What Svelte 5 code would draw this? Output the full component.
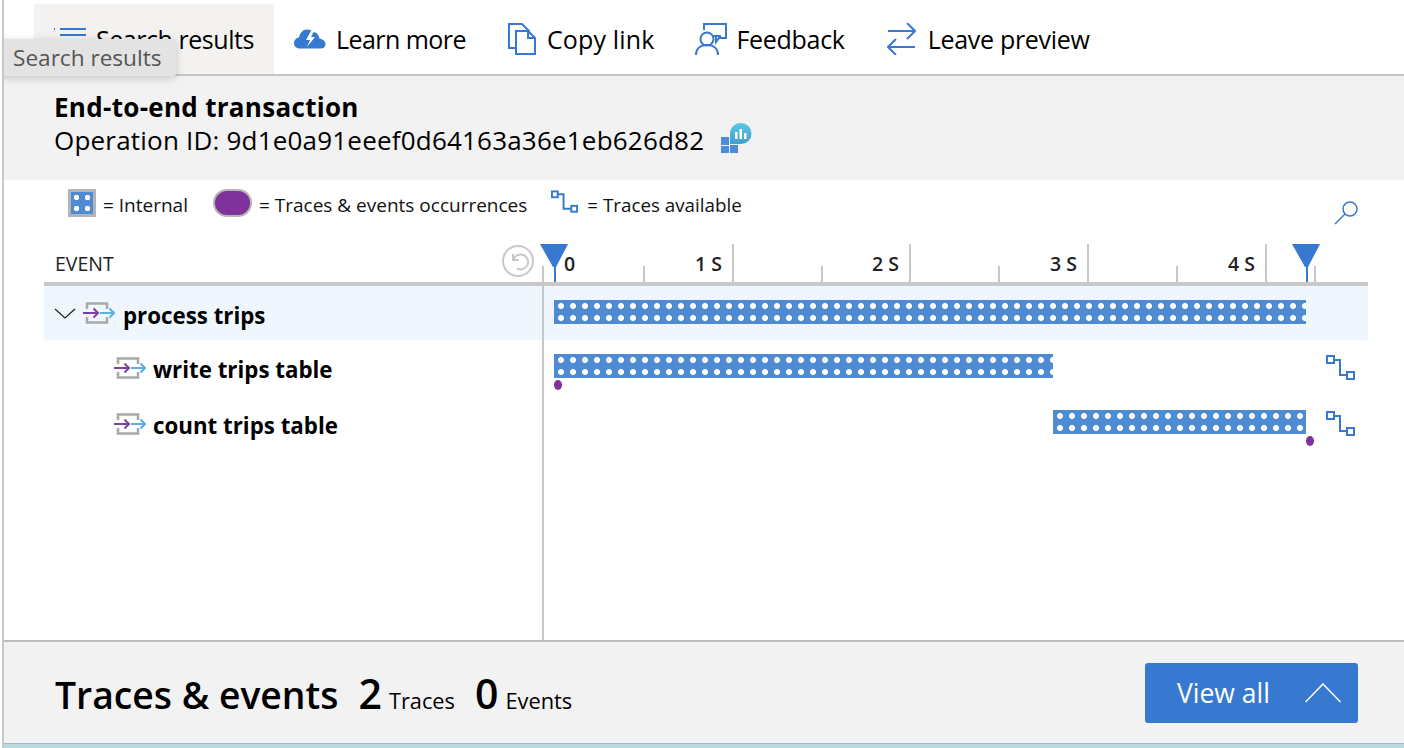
<script>
  const ticks = [
    { x: 99, major: false },
    { x: 188, major: true, label: '1 S' },
    { x: 277, major: false },
    { x: 365, major: true, label: '2 S' },
    { x: 454, major: false },
    { x: 543, major: true, label: '3 S' },
    { x: 632, major: false },
    { x: 721, major: true, label: '4 S' },
    { x: 770, major: false }
  ];

  const rows = [
    { name: 'process trips', root: true, left: 10, width: 752 },
    { name: 'write trips table', left: 10, width: 499, dot: 10, traces: true },
    { name: 'count trips table', left: 509, width: 253, dot: 762, traces: true }
  ];
</script>

{#snippet traceIcon()}
  <svg class="trace" width="29" height="26" viewBox="0 0 29 26" fill="none" stroke="#3778d0" stroke-width="2">
    <rect x="1" y="1" width="7" height="7" />
    <path d="M8 5h6v15h7" />
    <rect x="21" y="17" width="7" height="7" />
  </svg>
{/snippet}

{#snippet spanIcon()}
  <svg class="span" width="32" height="22" viewBox="0 0 32 22" fill="none" stroke-width="2">
    <path d="M4 7V1.500h20V7M4 15v5.500h20V15" stroke="#a9a9a9" stroke-width="2.500" />
    <path d="M0 11h15M10.500 6.500 15 11l-4.500 4.500" stroke="#7f3f9f" />
    <path d="M17 11h14M26.500 6.500 31 11l-4.500 4.500" stroke="#5fb0dc" />
  </svg>
{/snippet}

{#snippet marker(x)}
  <svg class="marker" style="left:{x}px" width="28" height="38" viewBox="0 0 28 38">
    <path d="M0 0h28L16 23v15h-2V23h-1z" fill="#3778d0" />
  </svg>
{/snippet}

<div class="page">
  <nav class="toolbar">
    <div class="tool active">
      <svg width="34" height="30" viewBox="0 0 34 30" fill="none" stroke="#3778d0" stroke-width="2">
        <path d="M8 5h26M8 11h26M8 17h26M2 5h1" />
      </svg>
      <span>Search results</span>
    </div>
    <div class="tool learn">
      <svg width="32" height="22" viewBox="0 0 32 22">
        <path d="M6 20.500C2 20.500 0 18 0 15s2.500-5.500 5-5.500C6 5 9 1.500 13 1.500c3 0 5 1 7 3 1-.5 3 .5 4 2.500 1.500 2 1 3 1.500 3.500 3 .5 6 2.500 6 5.500s-2 4.500-5 4.500z" fill="#3778d0" />
        <path d="M17 3l-5 9h4l-3 7 8-10h-4l3-6z" fill="#fff" />
      </svg>
      <span>Learn more</span>
    </div>
    <div class="tool copy">
      <svg width="29" height="32" viewBox="0 0 29 32" fill="none" stroke="#3778d0" stroke-width="2">
        <path d="M8 25H1V1h13l7 7v3" />
        <path d="M8 8h12l7 7v16H8zM20 8v7h7" />
      </svg>
      <span>Copy link</span>
    </div>
    <div class="tool">
      <svg width="32" height="33" viewBox="0 0 32 33" fill="none" stroke="#3778d0" stroke-width="2">
        <path d="M9 7V1h22v14h-7l-3 4v-6M26 13h-8" />
        <circle cx="12" cy="16" r="6.500" />
        <path d="M1 32c0-6 4-10 11-10s11 4 11 10" />
      </svg>
      <span>Feedback</span>
    </div>
    <div class="tool leave">
      <svg width="29" height="32" viewBox="0 0 29 32" fill="none" stroke="#3778d0" stroke-width="2">
        <path d="M1 8h27M20 0l8 8-8 8M28 24H2M9 16l-8 8 8 8" />
      </svg>
      <span>Leave preview</span>
    </div>
    <div class="tooltip">Search results</div>
  </nav>

  <header class="heading">
    <h1>End-to-end transaction</h1>
    <div class="op">
      <span>Operation ID: 9d1e0a91eeef0d64163a36e1eb626d82</span>
      <svg width="32" height="31" viewBox="0 0 32 31">
        <defs>
          <linearGradient id="ai" x1="0" y1="0" x2="0" y2="1">
            <stop offset="0" stop-color="#5cc8e6" />
            <stop offset="1" stop-color="#3f9fd0" />
          </linearGradient>
        </defs>
        <path d="M1 22h8v-8H1zM10 30h8v-8h-8zM1 30h8v-7H1z" fill="#4a8bdc" />
        <path d="M21 0a10.500 10.500 0 0 1 0 21H10V10.500A10.500 10.500 0 0 1 21 0z" fill="url(#ai)" />
        <path d="M15 9h2.500v7H15zM19.500 6H22v10h-2.500zM24 10h2.500v6H24z" fill="#fff" />
      </svg>
    </div>
  </header>

  <main class="chart">
    <div class="legend">
      <div class="legend-item">
        <span class="swatch"></span>
        <span class="legend-text">= Internal</span>
      </div>
      <div class="legend-item">
        <span class="pill"></span>
        <span class="legend-text">= Traces &amp; events occurrences</span>
      </div>
      <div class="legend-item tight">
        <svg width="28" height="26" viewBox="0 0 29 26" fill="none" stroke="#3778d0" stroke-width="2">
          <rect x="1" y="1" width="6" height="6" />
          <path d="M7 4h6v15h8" />
          <rect x="21" y="16" width="6" height="6" />
        </svg>
        <span class="legend-text">= Traces available</span>
      </div>
      <svg class="zoom" width="24" height="24" viewBox="0 0 24 24" fill="none" stroke="#3778d0" stroke-width="1.500">
        <circle cx="16" cy="8" r="7" />
        <path d="M11 13 1 23" />
      </svg>
    </div>

    <div class="gantt">
      <div class="axis-head">
        <div class="event-label">EVENT</div>
        <svg class="undo" width="32" height="32" viewBox="0 0 32 32" fill="none" stroke="#c8c8c8" stroke-width="2">
          <circle cx="16" cy="16" r="15" />
          <path d="M11 9v6h6M11.500 14.500A7.500 7.500 0 1 1 15 23.500" />
        </svg>
      </div>
      <div class="axis">
        {@render marker(-4)}
        {@render marker(748)}
        <span class="zero">0</span>
        {#each ticks as t}
          <div class="tick" class:major={t.major} style="left:{t.x}px">
            {#if t.label}<span>{t.label}</span>{/if}
          </div>
        {/each}
      </div>

      {#each rows as r}
        <div class="name" class:root={r.root}>
          {#if r.root}
            <svg class="chev" width="22" height="11" viewBox="0 0 22 11" fill="none" stroke="#222" stroke-width="1.300">
              <path d="M1 1l10 9 10-9" />
            </svg>
          {/if}
          {@render spanIcon()}
          <strong>{r.name}</strong>
        </div>
        <div class="lane" class:root={r.root}>
          <div class="bar" style="left:{r.left}px;width:{r.width}px"></div>
          {#if r.dot}<span class="dot" style="left:{r.dot}px"></span>{/if}
          {#if r.traces}{@render traceIcon()}{/if}
        </div>
      {/each}

      <div class="rest"></div>
      <div></div>
    </div>
  </main>

  <footer class="footer">
    <div class="counts">
      <span class="title">Traces &amp; events</span>
      <span class="num">2</span><span class="unit">Traces</span>
      <span class="num">0</span><span class="unit">Events</span>
    </div>
    <button class="view">
      <span>View all</span>
      <svg width="36" height="20" viewBox="0 0 36 20" fill="none" stroke="#fff" stroke-width="1.500">
        <path d="M0.500 19 18 1l17.500 18" />
      </svg>
    </button>
  </footer>
</div>

<style>
  :global(body) {
    margin: 0;
    background: #fff;
  }
  .page {
    height: 748px;
    margin-left: 2px;
    border-left: 2px solid #c8c8c8;
    display: flex;
    flex-direction: column;
    font-family: "Open Sans", "Noto Sans", sans-serif;
    color: #000;
    overflow: hidden;
    box-sizing: border-box;
  }
  .toolbar {
    position: relative;
    height: 76px;
    flex: none;
    box-sizing: border-box;
    padding: 4px 0 0 30px;
    border-bottom: 2px solid #c4c4c4;
    display: flex;
  }
  .tool {
    display: flex;
    align-items: center;
    gap: 10px;
    padding: 0 20px 0 18px;
    font-size: 25px;
    letter-spacing: -0.3px;
    white-space: nowrap;
  }
  .tool + .tool {
    padding-left: 20px;
  }
  .tool svg {
    flex: none;
  }
  .active {
    background: #f3f2f1;
    letter-spacing: -0.45px;
  }
  .learn {
    letter-spacing: -0.55px;
  }
  .tool.copy {
    letter-spacing: 0.15px;
    padding-left: 22px;
  }
  .tool.leave {
    padding-left: 22px;
    gap: 12px;
  }
  .tooltip {
    position: absolute;
    left: -4px;
    top: 39px;
    height: 37px;
    width: 176px;
    box-sizing: border-box;
    padding-left: 13px;
    line-height: 37px;
    font-size: 22.600px;
    letter-spacing: 0;
    color: #555;
    background: #e3e3e3;
    border-radius: 0 2px 2px 0;
    box-shadow: 0 2px 8px rgba(0, 0, 0, 0.18);
  }
  .heading {
    height: 104px;
    flex: none;
    box-sizing: border-box;
    padding: 14px 0 0 50px;
    background: #f2f2f2;
  }
  h1 {
    margin: 0 0 -1px;
    font-size: 26px;
    letter-spacing: 0.3px;
    font-weight: 700;
    line-height: 34px;
  }
  .op {
    display: flex;
    align-items: center;
    gap: 16px;
    font-size: 26px;
    letter-spacing: 0.2px;
    line-height: 34px;
  }
  .op svg {
    margin-top: -3px;
  }
  .chart {
    flex: 1;
    display: flex;
    flex-direction: column;
    min-height: 0;
  }
  .legend {
    height: 64px;
    flex: none;
    box-sizing: border-box;
    padding: 9px 46px 0 64px;
    display: flex;
    align-items: flex-start;
    gap: 25px;
    font-size: 19px;
    color: #111;
  }
  .legend-item {
    display: flex;
    align-items: center;
    gap: 7px;
    height: 28px;
  }
  .legend-item.tight {
    gap: 8px;
    margin-left: -1px;
    font-size: 18.800px;
  }
  .legend-text {
    padding-top: 3px;
  }
  .swatch {
    width: 28px;
    height: 28px;
    box-sizing: border-box;
    border: 3px solid #b4b4b4;
    background-color: #4f8bd2;
    background-image: radial-gradient(circle at 5.500px 5.500px, #fff 2.500px, transparent 3px);
    background-size: 11px 11px;
  }
  .pill {
    width: 39px;
    height: 28px;
    box-sizing: border-box;
    border-radius: 14px;
    border: 2px solid #b4b4b4;
    background: #7f319c;
  }
  .zoom {
    margin-left: auto;
    margin-top: 12px;
  }
  .gantt {
    flex: 1;
    margin: 0 36px 0 40px;
    display: grid;
    grid-template-columns: 500px 1fr;
    grid-template-rows: 42px 54px 56px 56px 1fr;
  }
  .axis-head {
    border-bottom: 4px solid #c8c8c8;
    display: flex;
    justify-content: space-between;
    position: relative;
  }
  .event-label {
    padding: 7px 0 0 11px;
    font-size: 19.500px;
    font-weight: 500;
    line-height: 26px;
    color: #222;
  }
  .undo {
    margin: 1px 10px 0 0;
  }
  .axis {
    position: relative;
    border-bottom: 4px solid #c8c8c8;
  }
  .axis::before {
    content: "";
    position: absolute;
    left: -2px;
    top: 22px;
    bottom: 0;
    width: 2px;
    background: #c8c8c8;
  }
  .marker {
    position: absolute;
    top: 0;
  }
  .zero {
    position: absolute;
    left: 20px;
    top: 7px;
    font-size: 19.500px;
    font-weight: 600;
    line-height: 26px;
    color: #222;
  }
  .tick {
    position: absolute;
    bottom: 0;
    width: 2px;
    height: 16px;
    background: #c8c8c8;
  }
  .tick.major {
    height: 38px;
  }
  .tick span {
    position: absolute;
    right: 12px;
    top: 7px;
    font-size: 19.500px;
    font-weight: 600;
    line-height: 26px;
    color: #222;
    white-space: nowrap;
  }
  .name {
    display: flex;
    align-items: center;
    gap: 7px;
    padding-left: 70px;
    border-right: 2px solid #c8c8c8;
    font-size: 22.300px;
  }
  .name strong {
    padding-top: 2px;
  }
  .name.root {
    padding-left: 10px;
    background: #eff6fd;
  }
  .name.root strong {
    padding-top: 5px;
    margin-left: 1px;
  }
  .lane {
    position: relative;
  }
  .lane.root {
    background: #eff6fd;
  }
  .bar {
    position: absolute;
    top: 14px;
    height: 24px;
    background-color: #4f8bd2;
    background-image: radial-gradient(circle at 7px 6px, #fff 2.700px, transparent 3.200px);
    background-size: 12px 12px;
  }
  .dot {
    position: absolute;
    top: 40px;
    width: 8px;
    height: 10px;
    border-radius: 50%;
    background: #7f319c;
  }
  .trace {
    position: absolute;
    right: 13px;
    top: 15px;
  }
  .rest {
    border-right: 2px solid #c8c8c8;
  }
  .footer {
    height: 108px;
    flex: none;
    box-sizing: border-box;
    border-top: 2px solid #bdbdbd;
    border-bottom: 4px solid #b9d9dc;
    box-shadow: inset 0 -1px 0 #9dbfc4;
    background: #f2f2f2;
    padding: 21px 46px 0 51px;
    display: flex;
    justify-content: space-between;
    align-items: flex-start;
  }
  .counts {
    display: flex;
    align-items: baseline;
    height: 60px;
    line-height: 60px;
  }
  .title {
    font-size: 37.300px;
    font-weight: 600;
  }
  .num {
    font-size: 41px;
    font-weight: 600;
    margin-left: 20px;
  }
  .unit {
    font-size: 21.800px;
    margin-left: 7px;
  }
  .view {
    width: 213px;
    height: 60px;
    border: 0;
    border-radius: 3px;
    background: #3778d0;
    color: #fff;
    font: inherit;
    font-size: 26.500px;
    display: flex;
    align-items: center;
    justify-content: space-between;
    padding: 0 17px 0 32px;
  }
</style>
